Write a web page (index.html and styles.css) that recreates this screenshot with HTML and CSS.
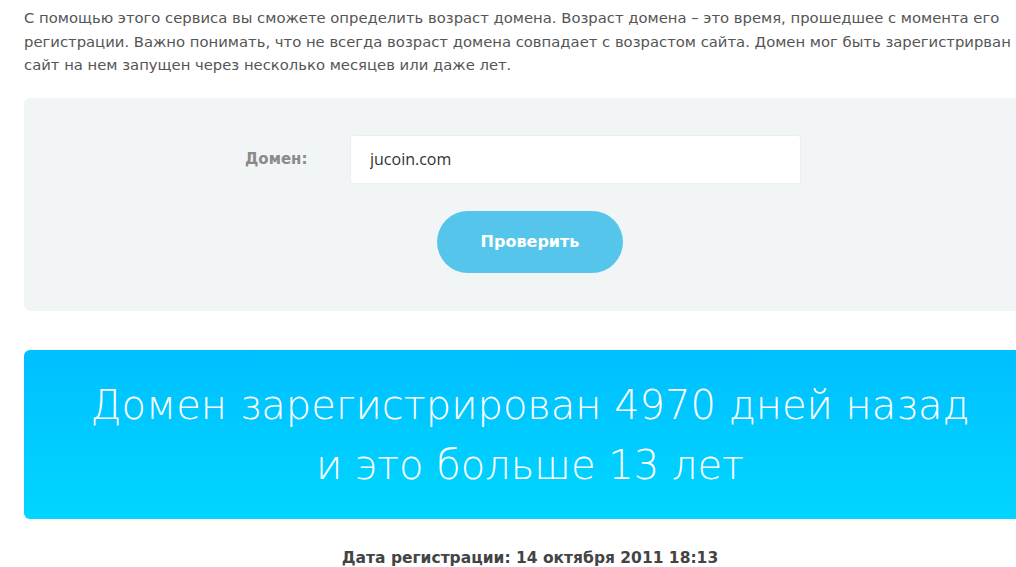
FILE: index.html
```html
<!DOCTYPE html>
<html lang="ru">
<head>
    <meta charset="UTF-8">
    <meta name="viewport" content="width=device-width, initial-scale=1.0">
    <title>Возраст домена</title>
    <link rel="stylesheet" href="styles.css">
</head>
<body>
    <main class="page">
        <p class="intro">
            С помощью этого сервиса вы сможете определить возраст домена. Возраст домена – это время, прошедшее с момента его<br>
            регистрации. Важно понимать, что не всегда возраст домена совпадает с возрастом сайта. Домен мог быть зарегистрирван а<br>
            сайт на нем запущен через несколько месяцев или даже лет.
        </p>

        <form class="check-form" onsubmit="return false;">
            <div class="field-row">
                <label class="field-label" for="domain">Домен:</label>
                <input class="field-input" id="domain" type="text" value="jucoin.com">
            </div>
            <button class="check-btn" type="submit">Проверить</button>
        </form>

        <section class="result">
            <h2 class="result-text">Домен зарегистрирован 4970 дней назад<br>и это больше 13 лет</h2>
        </section>

        <p class="reg-date">Дата регистрации: 14 октября 2011 18:13</p>
    </main>
</body>
</html>
```

FILE: styles.css
```css
html, body {
    overflow: hidden;
}
body {
    margin: 0;
    background: #fff;
    font-family: "DejaVu Sans", "Open Sans", sans-serif;
    color: #555;
}
.page {
    width: 1012px;
    margin-left: 24px;
    padding-top: 6px;
}
.intro {
    margin: 0 0 21px;
    font-size: 14.8px;
    line-height: 23.5px;
    white-space: nowrap;
    color: #555;
}

/* form block */
.check-form {
    background: #f2f5f6;
    border-radius: 6px;
    padding: 37px 0 38px;
    display: flex;
    flex-direction: column;
    align-items: center;
    gap: 27px;
}
.field-row {
    align-self: stretch;
    display: flex;
    align-items: center;
    padding-left: 221px;
}
.field-label {
    width: 105px;
    font-size: 15px;
    font-weight: bold;
    color: #8a8a8a;
}
.field-input {
    width: 451px;
    height: 49px;
    box-sizing: border-box;
    border: 1px solid #eceff0;
    border-radius: 3px;
    padding: 0 19px;
    font-family: "Open Sans", sans-serif;
    font-size: 16px;
    color: #333;
    background: #fff;
    outline: none;
}
.check-btn {
    width: 186px;
    height: 62px;
    border: none;
    border-radius: 31px;
    background: #56c5ec;
    color: #fff;
    font-family: "DejaVu Sans", sans-serif;
    font-size: 16px;
    font-weight: bold;
    cursor: pointer;
}

/* result */
.result {
    margin-top: 39px;
    height: 169px;
    box-sizing: border-box;
    padding-top: 25px;
    border-radius: 6px;
    background: linear-gradient(180deg, #00bfff 0%, #00d6ff 100%);
    text-align: center;
}
.result-text {
    margin: 0;
    font-size: 40px;
    font-weight: 300;
    line-height: 60px;
    color: #fff;
    font-family: "DejaVu Sans", sans-serif;
}
.reg-date {
    margin: 30px 0 0;
    text-align: center;
    font-size: 15.5px;
    font-weight: bold;
    color: #444;
}
```
